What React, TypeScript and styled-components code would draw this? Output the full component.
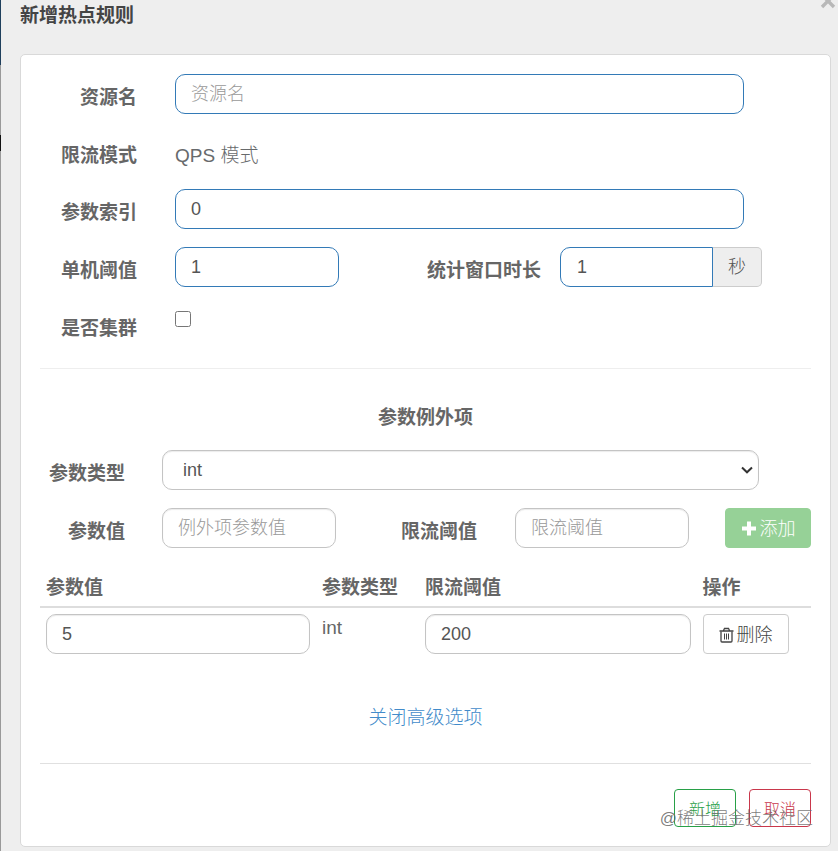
import React, { useState } from "react";
import styled, { createGlobalStyle, css } from "styled-components";

const GlobalStyle = createGlobalStyle`
  *, *::before, *::after { box-sizing: border-box; }
  body {
    margin: 0;
    background: #eeeeee;
    color: #676a6c;
    font-family: "Liberation Sans", "Noto Sans CJK SC", sans-serif;
    font-size: 19px;
    font-weight: 300;
    line-height: 27px;
  }
  input, select, button { font: inherit; }
`;

const Dialog = styled.main`
  position: relative;
  min-height: 100vh;
  padding: 0 7px 4px 19px;
  border-left: 1px solid #8f8f8f;
  border-image: linear-gradient(#1f3f5c 66px, #999 66px, #999 136px, #111 136px, #111 152px, #999 152px) 1;
`;

const Header = styled.header`
  display: flex;
  justify-content: space-between;
  align-items: flex-start;
  height: 54px;
`;

const Title = styled.h1`
  margin: 0;
  padding-top: 2px;
  font-size: 19px;
  font-weight: 700;
  color: #444;
`;

const CloseButton = styled.button`
  display: block;
  height: 14px;
  margin-right: -7px;
  padding: 0;
  border: 0;
  background: none;
  color: #b8b8b8;
  cursor: pointer;
  svg { display: block; height: 14px; }
`;

const Card = styled.section`
  padding: 19px;
  background: #fff;
  border: 1px solid #d9d9d9;
  border-radius: 5px;
`;

const Fields = styled.div`
  display: flex;
  flex-direction: column;
  gap: 18px;
`;

const Row = styled.div<{ $columns: string; $compact?: boolean }>`
  display: grid;
  grid-template-columns: ${(p) => p.$columns};
  align-items: start;
  height: ${(p) => (p.$compact ? 39 : 40)}px;
`;

const labelStyle = css<{ $gap?: number }>`
  padding: 10px ${(p) => p.$gap ?? 38}px 0 0;
  font-weight: 700;
  text-align: right;
  white-space: nowrap;
  color: #666;
`;

const Label = styled.label<{ $gap?: number }>`
  ${labelStyle}
`;

const LabelText = styled.span<{ $gap?: number }>`
  ${labelStyle}
`;

const StaticText = styled.span`
  padding-top: 10px;
`;

const fieldStyle = css<{ $accent?: boolean }>`
  min-width: 0;
  width: 100%;
  height: 40px;
  border: 1px solid ${(p) => (p.$accent ? "#337ab7" : "#c4c4c4")};
  border-radius: 10px;
  background: #fff;
  box-shadow: ${(p) => (p.$accent ? "none" : "inset 0 1px 1px rgba(0, 0, 0, 0.08)")};
  color: #555;
  font-size: 18px;
  line-height: 26px;
`;

const Input = styled.input<{ $accent?: boolean }>`
  ${fieldStyle}
  padding: 6px 15px;
  &::placeholder { color: #999; opacity: 1; }
`;

const Select = styled.select<{ $accent?: boolean }>`
  ${fieldStyle}
  grid-area: 1 / 1;
  appearance: none;
  padding: 6px 30px 6px 20px;
`;

const SelectBox = styled.div`
  display: grid;
  align-items: center;
  svg {
    grid-area: 1 / 1;
    justify-self: end;
    margin-right: 6px;
    pointer-events: none;
  }
`;

const InputGroup = styled.div`
  display: flex;
  min-width: 0;
  ${Input} {
    flex: 1;
    padding-left: 16px;
    border-radius: 10px 0 0 10px;
  }
`;

const Addon = styled.span`
  flex: 0 0 49px;
  height: 40px;
  border: 1px solid #ccc;
  border-left: 0;
  border-radius: 0 5px 5px 0;
  background: #eee;
  color: #555;
  font-size: 18px;
  line-height: 38px;
  text-align: center;
`;

const Checkbox = styled.input`
  width: 16px;
  height: 16px;
  margin: 6px 0 0;
`;

const Divider = styled.hr<{ $light?: boolean }>`
  margin: ${(p) => (p.$light ? 23 : 0)}px 0 0;
  border: 0;
  border-top: 1px solid ${(p) => (p.$light ? "#eee" : "#e0e0e0")};
`;

const SectionTitle = styled.h2`
  margin: 0;
  padding: 35px 0 19px;
  font-size: 19px;
  font-weight: 700;
  text-align: center;
  color: #666;
`;

const Button = styled.button<{ $kind: "add" | "plain" }>`
  display: flex;
  align-items: center;
  justify-content: center;
  gap: 3px;
  width: 86px;
  height: 40px;
  padding: 2px 0 0;
  border: 1px solid ${(p) => (p.$kind === "add" ? "#96d197" : "#ccc")};
  border-radius: 4px;
  background: ${(p) => (p.$kind === "add" ? "#96d197" : "#fff")};
  color: ${(p) => (p.$kind === "add" ? "#fff" : "#444")};
  font-size: 18px;
  line-height: 26px;
  white-space: nowrap;
  cursor: pointer;
`;

const Table = styled.table`
  width: 100%;
  margin-top: 18px;
  border-collapse: collapse;
  table-layout: fixed;
`;

const HeadCell = styled.th<{ $width: string }>`
  width: ${(p) => p.$width};
  height: 41px;
  padding: 9px 6px 5px;
  border-bottom: 2px solid #ddd;
  font-weight: 700;
  line-height: 24px;
  text-align: left;
  white-space: nowrap;
  color: #666;
`;

const Cell = styled.td`
  height: 52px;
  padding: 6px;
  vertical-align: top;
  color: #666;
  ${Input} { display: block; }
`;

const Toggle = styled.div`
  padding: 44px 0 32px;
  text-align: center;
`;

const Link = styled.a`
  color: #428bca;
  text-decoration: none;
`;

const Actions = styled.footer`
  display: flex;
  justify-content: flex-end;
  gap: 13px;
  padding-top: 25px;
`;

const ActionButton = styled.button<{ $color: string }>`
  width: 62px;
  height: 38px;
  padding: 2px 0 0;
  border: 1px solid ${(p) => p.$color};
  border-radius: 4px;
  background: #fff;
  color: ${(p) => p.$color};
  font-size: 16px;
  cursor: pointer;
`;

const Watermark = styled.span`
  position: absolute;
  right: 25px;
  bottom: 19px;
  color: rgba(110, 110, 110, 0.9);
  font-size: 17px;
  line-height: 26px;
  pointer-events: none;
`;

const CloseIcon = () => (
  <svg width="18" height="14" viewBox="0 0 18 14" aria-hidden="true">
    <path d="M2 -5L14 7M14 -5L2 7" stroke="currentColor" strokeWidth="3.4" />
  </svg>
);

const ChevronIcon = () => (
  <svg width="12" height="8" viewBox="0 0 12 8" fill="none" aria-hidden="true">
    <path d="M1 1.5L6 6.3L11 1.5" stroke="#333" strokeWidth="2" />
  </svg>
);

const PlusIcon = () => (
  <svg width="16" height="16" viewBox="0 0 16 16" aria-hidden="true">
    <path d="M6 0.5h4v5h5v4h-5v5H6v-5H1v-4h5z" fill="currentColor" />
  </svg>
);

const TrashIcon = () => (
  <svg width="15" height="17" viewBox="0 0 15 17" fill="none" stroke="currentColor" aria-hidden="true">
    <path d="M0.5 4h14M4.5 3.5L5.5 1.5h4l1 2" strokeWidth="1.3" />
    <path d="M2 4.5V14q0 1 1 1h9q1 0 1-1V4.5" strokeWidth="1.3" />
    <path d="M5.5 6.5v6M7.5 6.5v6M9.5 6.5v6" />
  </svg>
);

const WIDE_FIELD = "135px minmax(0, 1fr) 67px";
const STATIC_FIELD = "135px minmax(0, 1fr)";
const THRESHOLD_FIELDS = "135px minmax(0, 164fr) minmax(0, 221fr) minmax(0, 202fr) 49px";
const TYPE_FIELD = "122px minmax(0, 1fr) 52px";
const ITEM_FIELDS = "122px minmax(0, 174fr) minmax(0, 179fr) minmax(0, 174fr) 36px 86px";

export default function App() {
  const [resource, setResource] = useState("");
  const [index, setIndex] = useState("0");
  const [threshold, setThreshold] = useState("1");
  const [duration, setDuration] = useState("1");
  const [itemValue, setItemValue] = useState("5");
  const [itemLimit, setItemLimit] = useState("200");

  return (
    <>
      <GlobalStyle />
      <Dialog>
        <Header>
          <Title>新增热点规则</Title>
          <CloseButton type="button" aria-label="关闭"><CloseIcon /></CloseButton>
        </Header>
        <Card>
          <Fields>
            <Row $columns={WIDE_FIELD}>
              <Label htmlFor="resource">资源名</Label>
              <Input id="resource" $accent placeholder="资源名" value={resource} onChange={(e) => setResource(e.target.value)} />
            </Row>
            <Row $columns={STATIC_FIELD} $compact>
              <LabelText>限流模式</LabelText>
              <StaticText>QPS 模式</StaticText>
            </Row>
            <Row $columns={WIDE_FIELD}>
              <Label htmlFor="index">参数索引</Label>
              <Input id="index" $accent value={index} onChange={(e) => setIndex(e.target.value)} />
            </Row>
            <Row $columns={THRESHOLD_FIELDS}>
              <Label htmlFor="threshold">单机阈值</Label>
              <Input id="threshold" $accent value={threshold} onChange={(e) => setThreshold(e.target.value)} />
              <Label htmlFor="duration" $gap={19}>统计窗口时长</Label>
              <InputGroup>
                <Input id="duration" $accent value={duration} onChange={(e) => setDuration(e.target.value)} />
                <Addon>秒</Addon>
              </InputGroup>
            </Row>
            <Row $columns={STATIC_FIELD}>
              <Label htmlFor="cluster">是否集群</Label>
              <Checkbox id="cluster" type="checkbox" />
            </Row>
          </Fields>
          <Divider $light />

          <SectionTitle>参数例外项</SectionTitle>
          <Fields>
            <Row $columns={TYPE_FIELD}>
              <Label htmlFor="type" $gap={37}>参数类型</Label>
              <SelectBox>
                <Select id="type" defaultValue="int">
                  <option value="int">int</option>
                  <option value="double">double</option>
                  <option value="String">String</option>
                  <option value="long">long</option>
                </Select>
                <ChevronIcon />
              </SelectBox>
            </Row>
            <Row $columns={ITEM_FIELDS}>
              <Label htmlFor="value" $gap={37}>参数值</Label>
              <Input id="value" placeholder="例外项参数值" />
              <Label htmlFor="limit">限流阈值</Label>
              <Input id="limit" placeholder="限流阈值" />
              <span />
              <Button type="button" $kind="add"><PlusIcon />添加</Button>
            </Row>
          </Fields>

          <Table>
            <thead>
              <tr>
                <HeadCell $width="276px">参数值</HeadCell>
                <HeadCell $width="103px">参数类型</HeadCell>
                <HeadCell $width="36%">限流阈值</HeadCell>
                <HeadCell $width="auto">操作</HeadCell>
              </tr>
            </thead>
            <tbody>
              <tr>
                <Cell><Input aria-label="参数值" value={itemValue} onChange={(e) => setItemValue(e.target.value)} /></Cell>
                <Cell>int</Cell>
                <Cell><Input aria-label="限流阈值" value={itemLimit} onChange={(e) => setItemLimit(e.target.value)} /></Cell>
                <Cell><Button type="button" $kind="plain"><TrashIcon />删除</Button></Cell>
              </tr>
            </tbody>
          </Table>

          <Toggle><Link href="#">关闭高级选项</Link></Toggle>
          <Divider />
          <Actions>
            <ActionButton type="button" $color="#28a047">新增</ActionButton>
            <ActionButton type="button" $color="#c9374b">取消</ActionButton>
          </Actions>
        </Card>
        <Watermark>@稀土掘金技术社区</Watermark>
      </Dialog>
    </>
  );
}
